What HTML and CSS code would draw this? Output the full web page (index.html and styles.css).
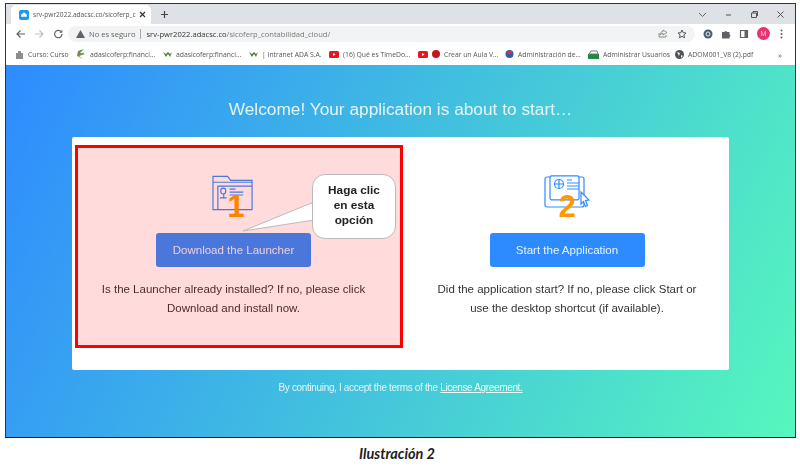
FILE: index.html
```html
<!DOCTYPE html>
<html lang="es">
<head>
<meta charset="utf-8">
<title>Ilustración 2</title>
<link rel="stylesheet" href="styles.css">
</head>
<body>
<div class="shot">
  <div class="tabstrip">
    <div class="tab">
      <span class="favicon"><svg width="8" height="7" viewBox="0 0 7 6"><path d="M1 5h5V3.200L3.500 1 1 3.200z" fill="#fff"/></svg></span>
      <span class="tab-title">srv-pwr2022.adacsc.co/sicoferp_c</span>
      <svg class="tab-x" width="7" height="7" viewBox="0 0 7 7"><path d="M1 1l5 5M6 1L1 6" stroke="#333" stroke-width="1.200"/></svg>
    </div>
    <svg class="plus" width="9" height="9" viewBox="0 0 9 9"><path d="M4.500 1v7M1 4.500h7" stroke="#444" stroke-width="1.200"/></svg>
    <div class="winctl">
      <svg width="9" height="9" viewBox="0 0 9 9"><path d="M1 3l3.500 3.500L8 3" fill="none" stroke="#666"/></svg>
      <svg width="9" height="9" viewBox="0 0 9 9"><path d="M2 5h5" stroke="#555"/></svg>
      <svg width="9" height="9" viewBox="0 0 9 9"><path d="M1.500 3h5v4.500h-5zM3 3V1.500h4.500V6" fill="none" stroke="#555"/></svg>
      <svg width="9" height="9" viewBox="0 0 9 9"><path d="M1.500 1.500l6 6M7.500 1.500l-6 6" stroke="#555"/></svg>
    </div>
  </div>
  <div class="toolbar">
    <svg class="nav" width="11" height="10" viewBox="0 0 11 10"><path d="M10 5H2M5.500 1.500L2 5l3.500 3.500" fill="none" stroke="#5f6368" stroke-width="1.200"/></svg>
    <svg class="nav" width="11" height="10" viewBox="0 0 11 10"><path d="M1 5h8M5.500 1.500L9 5 5.500 8.500" fill="none" stroke="#bdc1c6" stroke-width="1.200"/></svg>
    <svg class="nav" width="11" height="10" viewBox="0 0 11 10"><path d="M9 5a3.700 3.700 0 1 1-1.100-2.600" fill="none" stroke="#5f6368" stroke-width="1.200"/><path d="M9.300 0.800v3h-3z" fill="#5f6368"/></svg>
    <div class="omnibox">
      <svg width="9" height="8" viewBox="0 0 9 8"><path d="M4.500 0L9 8H0z" fill="#5f6368"/></svg>
      <span class="insecure">No es seguro</span>
      <span class="sep"></span>
      <span class="url"><b>srv-pwr2022.adacsc.co</b>/sicoferp_contabilidad_cloud/</span>
      <span class="omni-end">
        <svg width="10" height="9" viewBox="0 0 10 9"><path d="M1 4v4h7V6M5 1l4 2.500L5 6V4.500C3.500 4.500 2.500 5 2 6c0-2 1-3.200 3-3.500z" fill="none" stroke="#777" stroke-width=".8"/></svg>
        <svg width="10" height="10" viewBox="0 0 10 10"><path d="M5 1l1.200 2.700 2.800.3-2.100 1.900.6 2.900L5 7.300 2.500 8.800l.6-2.900L1 4l2.800-.3z" fill="none" stroke="#555"/></svg>
      </span>
    </div>
    <div class="toolicons">
      <svg width="10" height="10" viewBox="0 0 10 10"><circle cx="5" cy="5" r="4.500" fill="#4a6072"/><circle cx="5" cy="5" r="2" fill="none" stroke="#dfe6ee"/></svg>
      <svg width="10" height="10" viewBox="0 0 10 10"><path d="M1 3h2.500a1.300 1.300 0 0 1 2.500 0H8.500v2.500a1.300 1.300 0 0 1 0 2.500V9.500H1z" fill="#5f6368"/></svg>
      <svg width="10" height="10" viewBox="0 0 10 10"><path d="M1.500 1.500h7v7h-7z" fill="none" stroke="#5f6368" stroke-width="1.200"/><path d="M5.500 1.500h3v7h-3z" fill="#5f6368"/></svg>
      <span class="avatar">M</span>
      <svg class="kebab" width="3" height="10" viewBox="0 0 3 10"><circle cx="1.500" cy="1.500" r="1" fill="#5f6368"/><circle cx="1.500" cy="5" r="1" fill="#5f6368"/><circle cx="1.500" cy="8.500" r="1" fill="#5f6368"/></svg>
    </div>
  </div>
  <div class="bookmarks">
    <span class="bm bm1"><svg width="9" height="9" viewBox="0 0 9 9"><path d="M1 3h7v6H1zM3 1h3v2H3z" fill="#8a8f8c"/></svg>Curso: Curso</span>
    <span class="bm bm2"><svg width="9" height="10" viewBox="0 0 9 10"><path d="M1 2l6-2-4 4 5 1-6 2 4 3-6-3z" fill="#5a9e4b"/><path d="M1 6l6-2" stroke="#d9534f"/></svg>adasicoferp:financi...</span>
    <span class="bm bm3"><svg width="9" height="7" viewBox="0 0 9 7"><path d="M0 1l3 5 2-3 2 3 2-5-2 2-2-2-2 2z" fill="#5a7d3a"/></svg>adasicoferp:financi...</span>
    <span class="bm bm4"><svg width="9" height="7" viewBox="0 0 9 7"><path d="M0 1l3 5 2-3 2 3 2-5-2 2-2-2-2 2z" fill="#5a7d3a"/></svg>| Intranet ADA S.A.</span>
    <span class="bm bm5"><svg width="10" height="7" viewBox="0 0 10 7"><rect width="10" height="7" rx="1.500" fill="#e8161b"/><path d="M4 2v3l2.500-1.500z" fill="#fff"/></svg>(16) Qué es TimeDo...</span>
    <span class="bm bm6"><svg width="10" height="7" viewBox="0 0 10 7"><rect width="10" height="7" rx="1.500" fill="#e8161b"/><path d="M4 2v3l2.500-1.500z" fill="#fff"/></svg><svg width="8" height="8" viewBox="0 0 8 8"><circle cx="4" cy="4" r="4" fill="#c5161d"/></svg>Crear un Aula V...</span>
    <span class="bm bm7"><svg width="9" height="10" viewBox="0 0 9 10"><circle cx="4.500" cy="5" r="4" fill="#3c5aa6"/><path d="M2 2h5l-1 3H3z" fill="#d8333a"/></svg>Administración de...</span>
    <span class="bm bm8"><svg width="11" height="9" viewBox="0 0 11 9"><path d="M0 4h11v5H0z" fill="#1e8a45"/><path d="M1 4l2-3h6l1 3z" fill="none" stroke="#777"/></svg>Administrar Usuarios</span>
    <span class="bm bm9"><svg width="9" height="9" viewBox="0 0 9 9"><circle cx="4.500" cy="4.500" r="4.500" fill="#50555a"/><path d="M2 2l3 1-1 3zM6 5l2 1-2 2z" fill="#eee"/></svg>ADOM001_V8 (2).pdf</span>
    <span class="bm-more">»</span>
  </div>
  <div class="page">
    <h1 class="welcome">Welcome! Your application is about to start…</h1>
    <div class="card">
      <div class="option">
        <div class="iconwrap">
          <svg width="43" height="38" viewBox="0 0 44 38" fill="none" stroke="#2e8bff" stroke-width="1.200">
            <path d="M1 35V1h15l3 4h22v30z"/><path d="M1 7h40"/><path d="M6 35V11h35"/>
            <rect x="9" y="13" width="5" height="6" rx="2.500"/><path d="M8 23h7M12 19v4M18 14h6M18 17h14M18 20h14"/>
          </svg>
          <span class="num num-one">1</span>
        </div>
        <a class="btn">Download the Launcher</a>
        <p class="desc">Is the Launcher already installed? If no, please click<br>Download and install now.</p>
      </div>
      <div class="option">
        <div class="iconwrap">
          <svg width="46" height="38" viewBox="0 0 46 38" fill="none" stroke="#2e8bff" stroke-width="1.200">
            <rect x="1" y="2" width="39" height="30" rx="2"/><rect x="6" y="0.800" width="29" height="24" rx="1.500" fill="#fff"/>
            <circle cx="15" cy="9" r="4.500"/><path d="M15 5v8M11 9h8M23 5h5M23 8h12M23 11h12M23 14h12"/>
            <path d="M37 17l8 8-3.500.5 2 5-2 1-2-5-2.500 2.500z" fill="#fff"/>
          </svg>
          <span class="num">2</span>
        </div>
        <a class="btn">Start the Application</a>
        <p class="desc">Did the application start? If no, please click Start or<br>use the desktop shortcut (if available).</p>
      </div>
      <div class="highlight"></div>
      <div class="callout">
        <svg class="tail" width="90" height="40" viewBox="0 0 90 40"><path d="M1 31L72 2v18z" fill="#fff" stroke="#bbb"/></svg>
        <div class="bubble">Haga clic<br>en esta<br>opción</div>
      </div>
    </div>
    <p class="terms">By continuing, I accept the terms of the <u>License Agreement.</u></p>
  </div>
</div>
<p class="caption">Ilustración 2</p>
</body>
</html>
```

FILE: styles.css
```css
* { box-sizing: border-box; }
html, body { margin: 0; padding: 0; background: #fff; }
body { width: 800px; height: 468px; overflow: hidden; padding: 3px 5px 0 5px; font-family: "Liberation Sans", Arial, sans-serif; }

.shot { width: 791px; height: 435px; border: 1px solid #333; border-bottom-color: #111; display: flex; flex-direction: column; filter: blur(.35px); }

.tabstrip { height: 20px; background: #dee1e6; display: flex; align-items: flex-end; padding-left: 5px; font-family: "Open Sans", sans-serif; }
.tab { width: 140px; height: 19px; background: #fff; border-radius: 5px 5px 0 0; display: flex; align-items: center; padding: 0 5px 0 8px; gap: 4px; }
.favicon { width: 10px; height: 10px; border-radius: 2px; background: #1e9be8; display: flex; align-items: center; justify-content: center; flex: none; }
.tab-title { font-size: 6.600px; color: #555; white-space: nowrap; flex: none; width: 102px; }
.tab-x { flex: none; }
.plus { margin: 0 0 5px 9px; }
.winctl { margin-left: auto; display: flex; gap: 17px; padding-right: 10px; margin-bottom: 5px; }

.toolbar { height: 19px; background: #fff; display: flex; align-items: center; padding: 0 5px 0 9px; gap: 8px; font-family: "Open Sans", sans-serif; }
.nav { flex: none; }
.omnibox { width: 627px; height: 16px; background: #f1f3f4; border-radius: 8px; display: flex; align-items: center; padding: 0 8px; margin-left: -4px; font-size: 7.600px; flex: none; }
.insecure { color: #666; margin-left: 4px; }
.sep { width: 1px; height: 10px; background: #aaa; margin: 0 5px; }
.url { color: #777; }
.url b { font-weight: 400; color: #333; }
.omni-end { margin-left: auto; display: flex; gap: 9px; align-items: center; }
.toolicons { display: flex; align-items: center; gap: 8px; }
.avatar { width: 13px; height: 13px; border-radius: 50%; background: #e8316f; color: #ffd0dd; font-size: 7px; display: flex; align-items: center; justify-content: center; }
.kebab { margin-left: 2px; }

.bookmarks { height: 22px; background: #fff; display: flex; align-items: center; font-family: "Open Sans", sans-serif; font-size: 6.800px; color: #555; padding-left: 9px; }
.bm { display: flex; align-items: center; gap: 4px; white-space: nowrap; flex: none; }
.bm1 { width: 62px; } .bm2 { width: 86px; } .bm3 { width: 86px; } .bm4 { width: 80px; }
.bm5 { width: 89px; } .bm6 { width: 87px; } .bm7 { width: 83px; } .bm8 { width: 87px; } .bm9 { width: 90px; }
.bm-more { margin-left: auto; padding-right: 13px; font-size: 8px; }

.page { flex: 1; background: linear-gradient(115deg, #2e8bff 0%, #56f7bd 100%); display: flex; flex-direction: column; align-items: center; padding-top: 33px; }
.welcome { margin: 0; height: 39px; font-size: 17.300px; font-weight: 400; color: #e4f5f8; line-height: 23px; }
.card { width: 657px; height: 233px; background: #fff; border-radius: 2px; position: relative; display: grid; grid-template-columns: 323px 324px; column-gap: 10px; }
.option { display: flex; flex-direction: column; align-items: center; padding-top: 38px; }
.iconwrap { position: relative; width: 46px; height: 58px; display: flex; justify-content: center; }
.num { position: absolute; left: 50%; top: 15px; transform: translateX(-50%); font-size: 31px; line-height: 34px; font-weight: 700; color: #ff9800; }
.num-one { left: 55%; }
.btn { width: 155px; height: 34px; background: #2e8bff; border-radius: 3px; color: #e8f2ff; font-size: 11.500px; display: flex; align-items: center; justify-content: center; }
.desc { margin: 13px 0 0; font-size: 11.500px; line-height: 19px; color: #333; text-align: center; white-space: nowrap; }

.highlight { position: absolute; left: 3px; top: 8px; width: 328px; height: 203px; background: rgba(255, 0, 0, .14); border: 3px solid #f00; }
.callout { position: absolute; left: 170px; top: 37px; width: 154px; height: 66px; }
.tail { position: absolute; left: 0; top: 26px; }
.bubble { position: absolute; left: 70px; top: 0; width: 84px; height: 65px; background: #fff; border: 1px solid #bbb; border-radius: 13px; font-size: 11.800px; font-weight: 700; line-height: 15px; color: #222; text-align: center; padding-top: 8px; }

.terms { margin: 12px 0 0; font-size: 10px; color: #dff6f6; letter-spacing: -.34px; }
.terms u { color: #eafcf8; }

.caption { margin: 7px 0 0; text-align: center; font-family: Lato, sans-serif; font-style: italic; font-weight: 700; font-size: 14.500px; color: #222; padding-right: 6px; }
```
